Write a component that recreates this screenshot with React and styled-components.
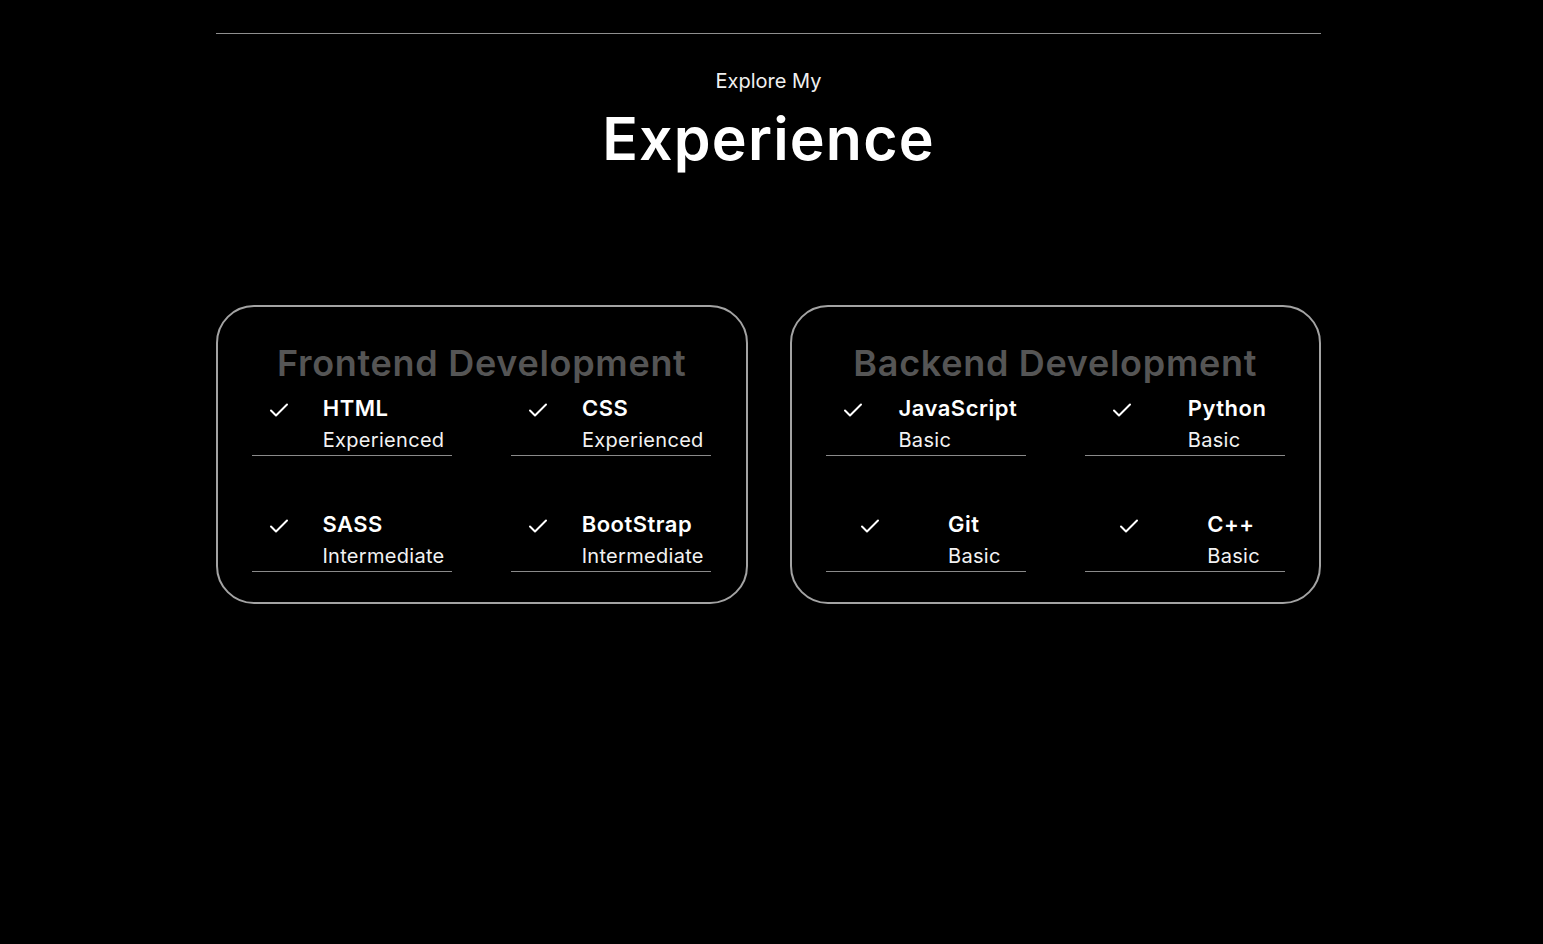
import React from "react";
import styled, { createGlobalStyle } from "styled-components";

const GlobalStyle = createGlobalStyle`
  * { box-sizing: border-box; }
  body {
    margin: 0;
    background: #000;
    color: #fff;
    font-family: Inter, "Noto Sans", sans-serif;
  }
`;

const frontend = [
  { name: "HTML", level: "Experienced" },
  { name: "CSS", level: "Experienced" },
  { name: "SASS", level: "Intermediate" },
  { name: "BootStrap", level: "Intermediate" },
];

const backend = [
  { name: "JavaScript", level: "Basic" },
  { name: "Python", level: "Basic" },
  { name: "Git", level: "Basic" },
  { name: "C++", level: "Basic" },
];

const CheckIcon = () => (
  <svg width="38" height="38" viewBox="0 0 38 38" fill="none" xmlns="http://www.w3.org/2000/svg">
    <polyline points="11,19.5 16,24.5 27,13.5" stroke="white" strokeWidth="2" strokeLinecap="round" strokeLinejoin="round" />
  </svg>
);

const SkillCard = ({ title, skills }) => (
  <Card>
    <CardTitle>{title}</CardTitle>
    <SkillGrid>
      {skills.map(({ name, level }) => (
        <Skill key={name}>
          <IconBox>
            <CheckIcon />
          </IconBox>
          <div>
            <SkillName>{name}</SkillName>
            <SkillLevel>{level}</SkillLevel>
          </div>
        </Skill>
      ))}
    </SkillGrid>
  </Card>
);

const App = () => (
  <>
    <GlobalStyle />
    <Section>
      <Divider />
      <Eyebrow>Explore My</Eyebrow>
      <Heading>Experience</Heading>
      <Cards>
        <SkillCard title="Frontend Development" skills={frontend} />
        <SkillCard title="Backend Development" skills={backend} />
      </Cards>
    </Section>
  </>
);

const Section = styled.section`
  width: 1105px;
  margin-left: 216px;
  padding-top: 33px;
  min-height: 944px;
`;

const Divider = styled.div`
  height: 1px;
  background: #8f8f8f;
`;

const Eyebrow = styled.p`
  margin: 32px 0 0;
  text-align: center;
  font-size: 20px;
  line-height: 30px;
  font-weight: 400;
  color: #f0f0f0;
`;

const Heading = styled.h1`
  margin: 8px 0 0;
  text-align: center;
  font-size: 59px;
  line-height: 70px;
  font-weight: 600;
  letter-spacing: 1.2px;
`;

const Cards = styled.div`
  display: flex;
  gap: 42px;
  margin-top: 131px;
`;

const Card = styled.div`
  flex: 1;
  border: 2px solid #a3a3a3;
  border-radius: 38px;
  padding: 28px 28px 30px;
  text-align: center;
`;

const CardTitle = styled.h2`
  margin: 0;
  font-size: 36px;
  line-height: 56px;
  font-weight: 600;
  letter-spacing: 0.7px;
  color: #555;
`;

const SkillGrid = styled.div`
  display: flex;
  flex-wrap: wrap;
  justify-content: space-around;
  gap: 51px 47px;
  text-align: left;
`;

const Skill = styled.article`
  display: flex;
  width: 200px;
  justify-content: space-around;
  gap: 9.6px;
  border-bottom: 1px solid #8a8a8a;
`;

const IconBox = styled.div`
  width: 38px;
  height: 38px;
  flex-shrink: 0;
`;

const SkillName = styled.h3`
  margin: 0;
  font-size: 22px;
  line-height: 34px;
  font-weight: 600;
  letter-spacing: 0.5px;
`;

const SkillLevel = styled.p`
  margin: 0;
  font-size: 20px;
  line-height: 30px;
  font-weight: 400;
  letter-spacing: 0.3px;
  color: #f2f2f2;
`;

export default App;
